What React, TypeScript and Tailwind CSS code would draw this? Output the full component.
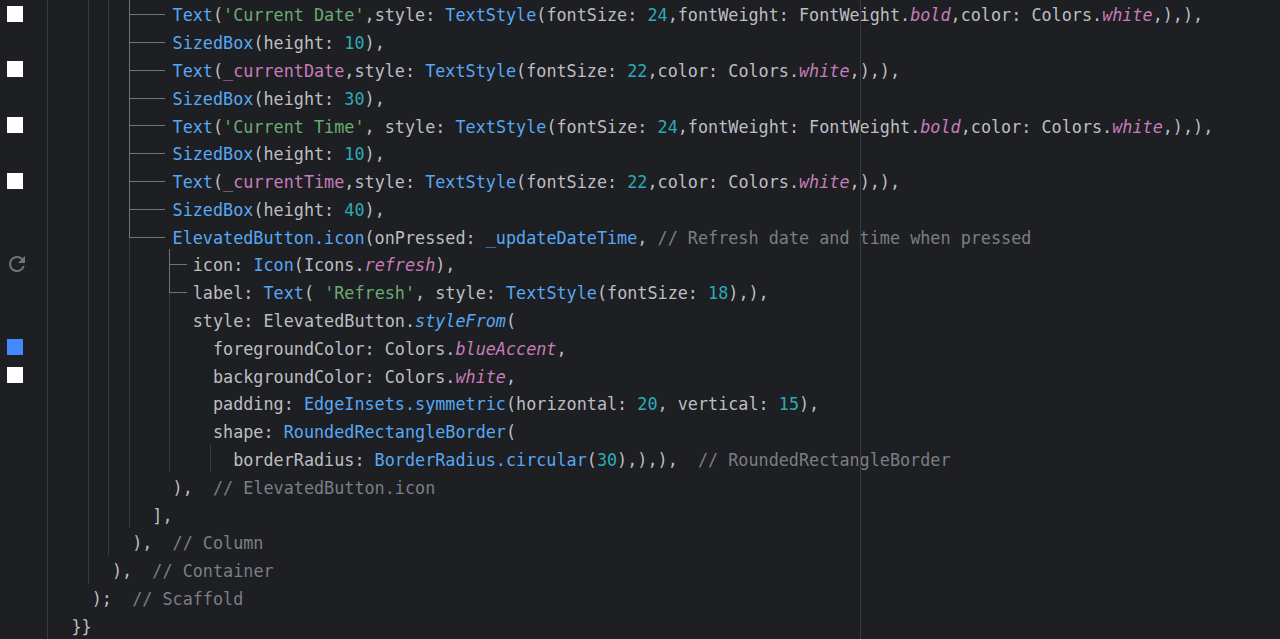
type Kind = 'd' | 'c' | 's' | 'n' | 'f' | 'i' | 'b' | 'm';
type Tok = [string, Kind];

const COLORS: Record<Kind, string> = {
  d: 'text-[#bcbec4]',
  c: 'text-[#56a8f5]',
  s: 'text-[#6aab73]',
  n: 'text-[#2aacb8]',
  f: 'text-[#c77dbb]',
  i: 'text-[#c77dbb] italic',
  b: 'text-[#56a8f5] italic',
  m: 'text-[#7a7e85]',
};

// gutter marker for a row: white / blue colour preview, or the refresh icon
type Marker = 'white' | 'blue' | 'refresh' | null;

const whiteTail: Tok[] = [
  ['Colors.', 'd'],
  ['white', 'i'],
  [',),),', 'd'],
];

const ROWS: { indent: number; marker?: Marker; toks: Tok[] }[] = [
  {
    indent: 10,
    marker: 'white',
    toks: [
      ['Text', 'c'],
      ['(', 'd'],
      ["'Current Date'", 's'],
      [',style: ', 'd'],
      ['TextStyle', 'c'],
      ['(fontSize: ', 'd'],
      ['24', 'n'],
      [',fontWeight: FontWeight.', 'd'],
      ['bold', 'i'],
      [',color: ', 'd'],
      ...whiteTail,
    ],
  },
  { indent: 10, toks: [['SizedBox', 'c'], ['(height: ', 'd'], ['10', 'n'], ['),', 'd']] },
  {
    indent: 10,
    marker: 'white',
    toks: [
      ['Text', 'c'],
      ['(', 'd'],
      ['_currentDate', 'f'],
      [',style: ', 'd'],
      ['TextStyle', 'c'],
      ['(fontSize: ', 'd'],
      ['22', 'n'],
      [',color: ', 'd'],
      ...whiteTail,
    ],
  },
  { indent: 10, toks: [['SizedBox', 'c'], ['(height: ', 'd'], ['30', 'n'], ['),', 'd']] },
  {
    indent: 10,
    marker: 'white',
    toks: [
      ['Text', 'c'],
      ['(', 'd'],
      ["'Current Time'", 's'],
      [', style: ', 'd'],
      ['TextStyle', 'c'],
      ['(fontSize: ', 'd'],
      ['24', 'n'],
      [',fontWeight: FontWeight.', 'd'],
      ['bold', 'i'],
      [',color: ', 'd'],
      ...whiteTail,
    ],
  },
  { indent: 10, toks: [['SizedBox', 'c'], ['(height: ', 'd'], ['10', 'n'], ['),', 'd']] },
  {
    indent: 10,
    marker: 'white',
    toks: [
      ['Text', 'c'],
      ['(', 'd'],
      ['_currentTime', 'f'],
      [',style: ', 'd'],
      ['TextStyle', 'c'],
      ['(fontSize: ', 'd'],
      ['22', 'n'],
      [',color: ', 'd'],
      ...whiteTail,
    ],
  },
  { indent: 10, toks: [['SizedBox', 'c'], ['(height: ', 'd'], ['40', 'n'], ['),', 'd']] },
  {
    indent: 10,
    toks: [
      ['ElevatedButton.icon', 'c'],
      ['(onPressed: ', 'd'],
      ['_updateDateTime', 'c'],
      [', ', 'd'],
      ['// Refresh date and time when pressed', 'm'],
    ],
  },
  {
    indent: 12,
    marker: 'refresh',
    toks: [
      ['icon: ', 'd'],
      ['Icon', 'c'],
      ['(Icons.', 'd'],
      ['refresh', 'i'],
      ['),', 'd'],
    ],
  },
  {
    indent: 12,
    toks: [
      ['label: ', 'd'],
      ['Text', 'c'],
      ['( ', 'd'],
      ["'Refresh'", 's'],
      [', style: ', 'd'],
      ['TextStyle', 'c'],
      ['(fontSize: ', 'd'],
      ['18', 'n'],
      ['),),', 'd'],
    ],
  },
  {
    indent: 12,
    toks: [
      ['style: ElevatedButton.', 'd'],
      ['styleFrom', 'b'],
      ['(', 'd'],
    ],
  },
  {
    indent: 14,
    marker: 'blue',
    toks: [
      ['foregroundColor: Colors.', 'd'],
      ['blueAccent', 'i'],
      [',', 'd'],
    ],
  },
  {
    indent: 14,
    marker: 'white',
    toks: [
      ['backgroundColor: Colors.', 'd'],
      ['white', 'i'],
      [',', 'd'],
    ],
  },
  {
    indent: 14,
    toks: [
      ['padding: ', 'd'],
      ['EdgeInsets.symmetric', 'c'],
      ['(horizontal: ', 'd'],
      ['20', 'n'],
      [', vertical: ', 'd'],
      ['15', 'n'],
      ['),', 'd'],
    ],
  },
  {
    indent: 14,
    toks: [
      ['shape: ', 'd'],
      ['RoundedRectangleBorder', 'c'],
      ['(', 'd'],
    ],
  },
  {
    indent: 16,
    toks: [
      ['borderRadius: ', 'd'],
      ['BorderRadius.circular', 'c'],
      ['(', 'd'],
      ['30', 'n'],
      ['),),),  ', 'd'],
      ['// RoundedRectangleBorder', 'm'],
    ],
  },
  { indent: 10, toks: [['),  ', 'd'], ['// ElevatedButton.icon', 'm']] },
  { indent: 8, toks: [['],', 'd']] },
  { indent: 6, toks: [['),  ', 'd'], ['// Column', 'm']] },
  { indent: 4, toks: [['),  ', 'd'], ['// Container', 'm']] },
  { indent: 2, toks: [[');  ', 'd'], ['// Scaffold', 'm']] },
  { indent: 0, toks: [['}}', 'd']] },
];

function Swatch({ marker }: { marker?: Marker }) {
  if (marker === 'white') return <div className="w-[16px] h-[16px] bg-white" />;
  if (marker === 'blue') return <div className="w-[16px] h-[16px] bg-[#448aff]" />;
  if (marker === 'refresh') {
    return (
      <svg className="ml-[-2px]" width="24" height="24" viewBox="0 0 24 24" fill="#6f737a">
        <path d="M17.65 6.35A7.96 7.96 0 0 0 12 4a8 8 0 1 0 7.73 10h-2.08A5.99 5.99 0 0 1 12 18a6 6 0 1 1 0-12c1.66 0 3.14.69 4.22 1.78L13 11h7V4l-2.35 2.35z" />
      </svg>
    );
  }
  return null;
}

// indent guides + the widget tree connectors
function Guides() {
  const faint = '#393b40';
  const tree = '#6f737a';
  const rowsY = [14, 42, 70, 98, 125, 153, 181, 209, 237];
  return (
    <svg className="absolute inset-0 pointer-events-none" width="1280" height="639" shapeRendering="crispEdges">
      <path d="M47.5 0V639" stroke={faint} />
      <path d="M88.5 0V584" stroke={faint} />
      <path d="M108.5 0V556" stroke={faint} />
      <path d="M129.5 237V528" stroke={faint} />
      <path d="M169.5 292V472" stroke={faint} />
      <path d="M210.5 444V472" stroke={faint} />
      <path d="M860.5 0V639" stroke={faint} />
      <path d="M129.5 0V237" stroke={tree} />
      {rowsY.map((y) => (
        <path key={y} d={`M129 ${y}.5H165`} stroke={tree} />
      ))}
      <path d="M169.5 249V292" stroke={tree} />
      <path d="M169 264.5H187M169 292.5H187" stroke={tree} />
    </svg>
  );
}

export default function App() {
  return (
    <div className="relative w-[1280px] h-[639px] overflow-hidden bg-[#1e1f22] font-[DejaVu_Sans_Mono] text-[16.8px]">
      <Guides />
      {ROWS.map((row, i) => (
        <div key={i} className="flex items-center h-[27.8px]">
          <div className="w-[71.5px] h-full shrink-0 pl-[7px] flex items-center">
            <Swatch marker={row.marker} />
          </div>
          <div className="whitespace-pre pt-1">
            {' '.repeat(row.indent)}
            {row.toks.map(([text, kind], j) => (
              <span key={j} className={COLORS[kind]}>
                {text}
              </span>
            ))}
          </div>
        </div>
      ))}
    </div>
  );
}
